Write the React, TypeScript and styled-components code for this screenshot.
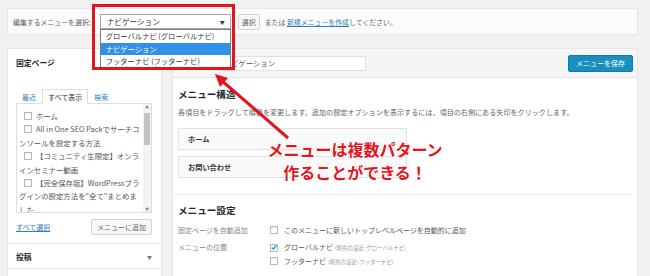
import React from 'react'
import styled, { createGlobalStyle } from 'styled-components'

const GlobalStyle = createGlobalStyle`
  html, body {
    margin: 0;
    padding: 0;
  }
  body {
    background: #f1f1f1;
    font-family: 'Noto Sans CJK JP', 'Noto Sans', sans-serif;
    color: #555;
    overflow: hidden;
  }
  * {
    box-sizing: border-box;
  }
`

const Page = styled.div`
  position: relative;
  width: 650px;
  height: 276px;
  padding: 8px 12px 0 7px;
  overflow: hidden;
`

/* ---------- top bar ---------- */

const TopBar = styled.div`
  display: flex;
  align-items: center;
  height: 27px;
  padding: 0 5px;
  background: #fbfbfb;
  border: 1px solid #e6e6e6;
  font-size: 6.9px;
  color: #666;
  white-space: nowrap;
`

const TopLabel = styled.span`
  margin-right: 9px;
`

const SelectWrap = styled.div`
  position: relative;
  width: 131px;
  height: 15px;
`

const SelectBox = styled.div`
  display: flex;
  align-items: center;
  justify-content: space-between;
  height: 100%;
  padding: 0 5px 0 6px;
  background: #fff;
  border: 1px solid #a9a9a9;
  font-size: 7.6px;
  color: #333;
`

const Caret = styled.span`
  font-size: 5px;
  color: #333;
`

const OptionList = styled.div`
  position: absolute;
  top: 100%;
  left: 0;
  width: 100%;
  background: #fff;
  border: 1px solid #7d7d7d;
  z-index: 5;
`

const Option = styled.div<{ $selected?: boolean }>`
  height: 12.7px;
  line-height: 12.7px;
  padding-left: 5px;
  font-size: 7.3px;
  color: ${(p) => (p.$selected ? '#fff' : '#333')};
  background: ${(p) => (p.$selected ? '#3390e8' : 'transparent')};
`

const RedFrame = styled.div`
  position: absolute;
  left: -8px;
  top: -10px;
  width: 143px;
  height: 66px;
  border: 3px solid #e3151c;
  z-index: 6;
  pointer-events: none;
`

const SmallButton = styled.button<{ $width: number }>`
  width: ${(p) => p.$width}px;
  height: 16px;
  padding: 0;
  border: 1px solid #d4d4d4;
  border-radius: 2px;
  background: #f7f7f7;
  font-family: inherit;
  font-size: 7px;
  color: #666;
`

const Link = styled.a`
  color: #2f7fb5;
  text-decoration: underline;
`

const Or = styled.span`
  margin-left: 5px;
`

/* ---------- columns ---------- */

const Columns = styled.div`
  display: flex;
  gap: 10px;
  margin-top: 13px;
  height: 240px;
`

const Sidebar = styled.div`
  width: 155px;
  flex: none;
  background: #fff;
  border: 1px solid #e6e6e6;
`

const SectionTitle = styled.div<{ $height: number }>`
  display: flex;
  align-items: center;
  justify-content: space-between;
  height: ${(p) => p.$height}px;
  padding: 0 9px 0 8px;
  font-size: 7.8px;
  font-weight: 600;
  color: #23282d;
`

const Section = styled.div`
  border-top: 1px solid #e3e3e3;
`

const SectionArrow = styled.span`
  font-size: 5px;
  color: #777;
`

const SectionBody = styled.div`
  padding: 12px 9px 8px 8px;
`

const Tabs = styled.div`
  display: flex;
  align-items: flex-end;
  height: 15px;
  font-size: 7px;
`

const Tab = styled.span<{ $active?: boolean }>`
  display: flex;
  align-items: center;
  height: 15px;
  padding: 0 5px;
  margin-bottom: -1px;
  position: relative;
  color: ${(p) => (p.$active ? '#333' : '#2f7fb5')};
  background: ${(p) => (p.$active ? '#fff' : 'transparent')};
  border: 1px solid ${(p) => (p.$active ? '#ddd' : 'transparent')};
  border-bottom-color: ${(p) => (p.$active ? '#fff' : 'transparent')};
`

const ListBox = styled.div`
  display: flex;
  height: 110px;
  border: 1px solid #ddd;
  overflow: hidden;
`

const ListContent = styled.div`
  flex: 1;
  padding: 5px 1px 0 2px;
  font-size: 7.4px;
  line-height: 13.4px;
  color: #555;
  overflow: hidden;
`

const ListItem = styled.div`
  word-break: break-all;
`

const Scrollbar = styled.div`
  width: 8px;
  flex: none;
  display: flex;
  flex-direction: column;
  align-items: center;
  background: #f3f3f3;
  font-size: 4px;
  color: #888;
`

const ScrollThumb = styled.div`
  width: 6px;
  height: 32px;
  margin: 3px 0 auto;
  background: #c3c3c3;
`

const Checkbox = styled.span<{ $gapLeft: number; $gapRight: number }>`
  display: inline-flex;
  align-items: center;
  justify-content: center;
  width: 8px;
  height: 8px;
  margin: 0 ${(p) => p.$gapRight}px 0 ${(p) => p.$gapLeft}px;
  vertical-align: -1px;
  border: 1px solid #b4b9be;
  background: #fff;
  box-shadow: inset 0 1px 1px rgba(0, 0, 0, 0.08);
`

const ListFooter = styled.div`
  display: flex;
  align-items: center;
  justify-content: space-between;
  margin-top: 6px;
  font-size: 7px;
`

/* ---------- main menu editor ---------- */

const Editor = styled.div`
  flex: 1;
  display: flex;
  flex-direction: column;
`

const EditorHeader = styled.div`
  display: flex;
  align-items: center;
  justify-content: space-between;
  height: 30px;
  padding: 0 4px 0 6px;
  background: #f5f5f5;
  border: 1px solid #e6e6e6;
`

const NameField = styled.div`
  display: flex;
  align-items: center;
  gap: 5px;
  font-size: 7px;
  color: #555;
`

const NameInput = styled.div`
  width: 147px;
  height: 15px;
  display: flex;
  align-items: center;
  padding-left: 4px;
  background: #fff;
  border: 1px solid #e0e0e0;
  font-size: 7.3px;
  color: #555;
`

const PrimaryButton = styled.button`
  width: 65px;
  height: 17px;
  padding: 0;
  border: 1px solid #0f7bab;
  border-radius: 2px;
  background: #1b8ec0;
  font-family: inherit;
  font-size: 7px;
  color: #fff;
`

const EditorBody = styled.div`
  flex: 1;
  padding: 0 6px 0 5px;
  background: #fff;
  border: 1px solid #e6e6e6;
  border-top: none;
`

const Heading = styled.div<{ $top: number }>`
  margin-top: ${(p) => p.$top}px;
  font-size: 9.6px;
  line-height: 14px;
  font-weight: 700;
  color: #23282d;
`

const Description = styled.div`
  margin-top: 6px;
  font-size: 7.1px;
  line-height: 10px;
  color: #666;
  white-space: nowrap;
`

const MenuItems = styled.div`
  display: flex;
  flex-direction: column;
  gap: 6px;
  margin-top: 11px;
`

const MenuItem = styled.div`
  width: 229px;
  height: 22px;
  display: flex;
  align-items: center;
  padding-left: 9px;
  background: #fafafa;
  border: 1px solid #e2e2e2;
  font-size: 7.2px;
  font-weight: 600;
  color: #333;
`

const Divider = styled.div`
  margin: 16px -1px 0 -5px;
  border-top: 1px solid #eeeeee;
`

const SettingsGrid = styled.div`
  display: grid;
  grid-template-columns: 92px 1fr;
  row-gap: 4px;
  margin-top: 7px;
  font-size: 7px;
  line-height: 13px;
`

const SettingLabel = styled.div`
  color: #888;
`

const SettingValue = styled.div`
  color: #555;
  white-space: nowrap;
`

const Hint = styled.span`
  margin-left: 2px;
  font-size: 5.4px;
  color: #999;
`

/* ---------- annotation overlay ---------- */

const ArrowSvg = styled.svg`
  position: absolute;
  left: 212px;
  top: 70px;
  z-index: 7;
  pointer-events: none;
`

const Callout = styled.div`
  position: absolute;
  left: 255px;
  top: 138px;
  width: 200px;
  text-align: center;
  font-size: 16px;
  line-height: 23px;
  font-weight: 700;
  color: #e3151c;
  z-index: 7;
  text-shadow: 1px 1px 0 #fff, -1px -1px 0 #fff, 1px -1px 0 #fff, -1px 1px 0 #fff,
    0 1px 0 #fff, 0 -1px 0 #fff, 1px 0 0 #fff, -1px 0 0 #fff, 0 0 3px rgba(0, 0, 0, 0.25);
`

const Check = () => (
  <svg width="7" height="7" viewBox="0 0 7 7">
    <path d="M1 3.6 L2.8 5.4 L6.2 1.2" fill="none" stroke="#1e8cbe" strokeWidth="1.5" />
  </svg>
)

const pages = [
  'ホーム',
  'All in One SEO Packでサーチコンソールを設定する方法',
  '【コミュニティ生限定】オンラインセミナー動画',
  '【完全保存版】WordPressプラグインの設定方法を"全て"まとめました。',
]

export default function App() {
  return (
    <>
      <GlobalStyle />
      <Page>
        <TopBar>
          <TopLabel>編集するメニューを選択:</TopLabel>
          <SelectWrap>
            <SelectBox>
              <span>ナビゲーション</span>
              <Caret>▼</Caret>
            </SelectBox>
            <OptionList>
              <Option>グローバルナビ (グローバルナビ)</Option>
              <Option $selected>ナビゲーション</Option>
              <Option>フッターナビ (フッターナビ)</Option>
            </OptionList>
            <RedFrame />
          </SelectWrap>
          <SmallButton $width={22} style={{ marginLeft: 7 }}>
            選択
          </SmallButton>
          <Or>
            または <Link>新規メニューを作成</Link>してください。
          </Or>
        </TopBar>

        <Columns>
          <Sidebar>
            <SectionTitle $height={27}>固定ページ</SectionTitle>
            <SectionBody>
              <Tabs>
                <Tab>最近</Tab>
                <Tab $active>すべて表示</Tab>
                <Tab>検索</Tab>
              </Tabs>
              <ListBox>
                <ListContent>
                  {pages.map((p) => (
                    <ListItem key={p}>
                      <Checkbox $gapLeft={5} $gapRight={4} />
                      {p}
                    </ListItem>
                  ))}
                </ListContent>
                <Scrollbar>
                  <span>▲</span>
                  <ScrollThumb />
                  <span>▼</span>
                </Scrollbar>
              </ListBox>
              <ListFooter>
                <Link>すべて選択</Link>
                <SmallButton $width={61}>メニューに追加</SmallButton>
              </ListFooter>
            </SectionBody>
            <Section>
              <SectionTitle $height={24}>
                投稿
                <SectionArrow>▼</SectionArrow>
              </SectionTitle>
            </Section>
            <Section>
              <SectionTitle $height={24}>カスタムリンク</SectionTitle>
            </Section>
          </Sidebar>

          <Editor>
            <EditorHeader>
              <NameField>
                メニュー名
                <NameInput>ナビゲーション</NameInput>
              </NameField>
              <PrimaryButton>メニューを保存</PrimaryButton>
            </EditorHeader>
            <EditorBody>
              <Heading $top={9}>メニュー構造</Heading>
              <Description>
                各項目をドラッグして順番を変更します。追加の設定オプションを表示するには、項目の右側にある矢印をクリックします。
              </Description>
              <MenuItems>
                <MenuItem>ホーム</MenuItem>
                <MenuItem>お問い合わせ</MenuItem>
              </MenuItems>
              <Divider />
              <Heading $top={8}>メニュー設定</Heading>
              <SettingsGrid>
                <SettingLabel>固定ページを自動追加</SettingLabel>
                <SettingValue>
                  <Checkbox $gapLeft={0} $gapRight={6} />
                  このメニューに新しいトップレベルページを自動的に追加
                </SettingValue>
                <SettingLabel>メニューの位置</SettingLabel>
                <SettingValue>
                  <div>
                    <Checkbox $gapLeft={0} $gapRight={6}>
                      <Check />
                    </Checkbox>
                    グローバルナビ<Hint>(現在の設定: グローバルナビ)</Hint>
                  </div>
                  <div>
                    <Checkbox $gapLeft={0} $gapRight={6} />
                    フッターナビ<Hint>(現在の設定: フッターナビ)</Hint>
                  </div>
                </SettingValue>
              </SettingsGrid>
            </EditorBody>
          </Editor>
        </Columns>

        <ArrowSvg width="80" height="72" viewBox="0 0 80 72">
          <line x1="76" y1="68" x2="9" y2="10" stroke="#e3151c" strokeWidth="3" />
          <polygon points="3,4 16,8 8,17" fill="#e3151c" />
        </ArrowSvg>

        <Callout>
          メニューは複数パターン
          <br />
          作ることができる！
        </Callout>
      </Page>
    </>
  )
}
